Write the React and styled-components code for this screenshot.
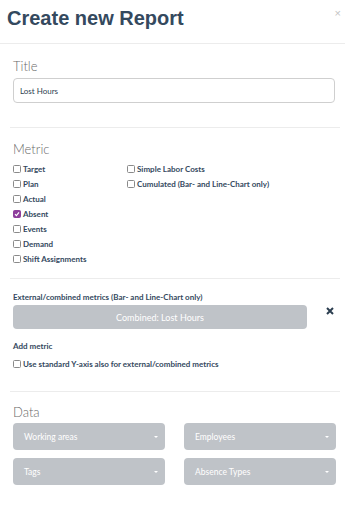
import React from "react";
import styled, { createGlobalStyle } from "styled-components";

const Global = createGlobalStyle`
  html, body { margin: 0; padding: 0; background: #fff; }
  body { font-family: Lato, "Liberation Sans", sans-serif; color: #34495e; }
  * { box-sizing: border-box; }
`;

const Page = styled.div`
  width: 345px;
  height: 507px;
  overflow: hidden;
  background: #fff;
`;

const Header = styled.header`
  display: flex;
  justify-content: space-between;
  align-items: flex-start;
  padding: 7px 4px 13px 7px;
  border-bottom: 1px solid #ececec;
`;

const Heading = styled.h1`
  margin: 0;
  font-family: "Liberation Sans", Arial, sans-serif;
  font-weight: 700;
  font-size: 20px;
  line-height: 23px;
  color: #34495e;
`;

const Close = styled.span`
  font-family: "Liberation Sans", Arial, sans-serif;
  font-size: 11px;
  line-height: 11px;
  color: #c4c4c4;
  margin-top: 1px;
`;

const Body = styled.div`
  padding: 0 5px 0 10px;
`;

const Section = styled.section`
  padding: ${(p) => p.$pad};
  & + & {
    border-top: 1px solid #ececec;
  }
`;

const Label = styled.div`
  font-family: Lato, sans-serif;
  font-weight: 300;
  font-size: 13px;
  line-height: 17px;
  color: #6a6a6a;
`;

const Input = styled.div`
  margin-top: 3px;
  width: 322px;
  height: 25px;
  border: 1px solid #cfcfcf;
  border-radius: 4px;
  padding: 0 6px;
  display: flex;
  align-items: center;
  font-size: 8px;
  font-weight: 400;
  color: #2c3e50;
`;

const Checks = styled.div`
  margin-top: 3px;
  display: grid;
  grid-template-columns: 114px auto;
  grid-auto-flow: column;
  grid-template-rows: repeat(7, 15px);
`;

const CheckRow = styled.label`
  display: flex;
  align-items: center;
  height: 15px;
  font-size: 8px;
  font-weight: 700;
  color: #34495e;
  white-space: nowrap;
  margin-top: ${(p) => p.$mt || 0}px;
`;

const Box = styled.span`
  width: 8px;
  height: 8px;
  margin-right: 2px;
  border-radius: 1.5px;
  border: 1px solid ${(p) => (p.$checked ? "#8e3e9c" : "#8a8a8a")};
  background: ${(p) => (p.$checked ? "#8e3e9c" : "#fff")};
  display: flex;
  align-items: center;
  justify-content: center;
  flex: none;
`;

const Bold = styled.div`
  font-size: 8px;
  font-weight: 700;
  line-height: 13px;
  color: #34495e;
  margin-top: ${(p) => p.$mt || 0}px;
`;

const ComboRow = styled.div`
  margin-top: 1px;
  display: flex;
  align-items: flex-start;
`;

const Combined = styled.div`
  width: 294px;
  height: 24px;
  border-radius: 4px;
  background: #bfc3c8;
  color: #fff;
  font-size: 9px;
  font-weight: 400;
  display: flex;
  align-items: center;
  justify-content: center;
`;

const Remove = styled.span`
  margin: 2px 0 0 19px;
  display: flex;
`;

const Grid = styled.div`
  margin-top: 2px;
  display: grid;
  grid-template-columns: 152px 152px;
  column-gap: 19px;
  row-gap: 8px;
`;

const Select = styled.div`
  height: 27px;
  border-radius: 4px;
  background: #bfc3c8;
  color: #fff;
  font-size: 8.5px;
  font-weight: 400;
  display: flex;
  align-items: center;
  justify-content: space-between;
  padding: 0 7px 0 11px;
`;

const Caret = styled.span`
  width: 0;
  height: 0;
  border-left: 2px solid transparent;
  border-right: 2px solid transparent;
  border-top: 2.5px solid #fff;
`;

function Check({ label, checked, mt }) {
  return (
    <CheckRow $mt={mt}>
      <Box $checked={checked}>
        {checked && (
          <svg width="6" height="6" viewBox="0 0 6 6">
            <path d="M1 3.2 L2.4 4.6 L5 1.4" stroke="#fff" strokeWidth="1.2" fill="none" />
          </svg>
        )}
      </Box>
      {label}
    </CheckRow>
  );
}

export default function App() {
  const left = ["Target", "Plan", "Actual", "Absent", "Events", "Demand", "Shift Assignments"];
  return (
    <Page>
      <Global />
      <Header>
        <Heading>Create new Report</Heading>
        <Close>×</Close>
      </Header>
      <Body>
        <Section $pad="14px 4px 24px 3px">
          <Label>Title</Label>
          <Input>Lost Hours</Input>
        </Section>
        <Section $pad="13px 4px 12px 3px">
          <Label>Metric</Label>
          <Checks>
            {left.map((l) => (
              <Check key={l} label={l} checked={l === "Absent"} />
            ))}
            <Check label="Simple Labor Costs" />
            <Check label="Cumulated (Bar- and Line-Chart only)" />
          </Checks>
        </Section>
        <Section $pad="12px 4px 20px 3px">
          <Bold>External/combined metrics (Bar- and Line-Chart only)</Bold>
          <ComboRow>
            <Combined>Combined: Lost Hours</Combined>
            <Remove>
              <svg width="8" height="8" viewBox="0 0 8 8">
                <path d="M1 1 L7 7 M7 1 L1 7" stroke="#2c3e50" strokeWidth="2" />
              </svg>
            </Remove>
          </ComboRow>
          <Bold $mt={11}>Add metric</Bold>
          <Check label="Use standard Y-axis also for external/combined metrics" mt={3} />
        </Section>
        <Section $pad="12px 4px 20px 3px">
          <Label>Data</Label>
          <Grid>
            <Select>Working areas<Caret /></Select>
            <Select>Employees<Caret /></Select>
            <Select>Tags<Caret /></Select>
            <Select>Absence Types<Caret /></Select>
          </Grid>
        </Section>
      </Body>
    </Page>
  );
}
